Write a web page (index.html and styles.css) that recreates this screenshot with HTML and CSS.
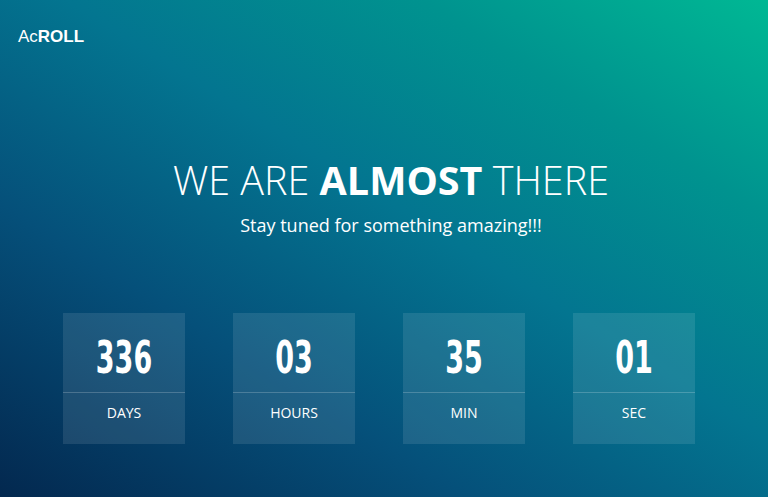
FILE: index.html
```html
<!DOCTYPE html>
<html>
<head>
<meta charset="utf-8">
<link rel="stylesheet" href="styles.css">
</head>
<body>
<div class="page">
  <header class="logo"><span class="ac">Ac</span><span class="roll">ROLL</span></header>
  <section class="hero">
    <h1 class="title">WE ARE <strong>ALMOST</strong> THERE</h1>
    <p class="subtitle">Stay tuned for something amazing!!!</p>
  </section>
  <section class="countdown">
    <div class="box"><div class="num"><span>336</span></div><div class="label">DAYS</div></div>
    <div class="box"><div class="num"><span>03</span></div><div class="label">HOURS</div></div>
    <div class="box"><div class="num"><span>35</span></div><div class="label">MIN</div></div>
    <div class="box"><div class="num"><span>01</span></div><div class="label">SEC</div></div>
  </section>
</div>
</body>
</html>
```
FILE: styles.css
```css
html, body {
  margin: 0;
  padding: 0;
  height: 100%;
  overflow: hidden;
}
.page {
  width: 768px;
  height: 497px;
  background: linear-gradient(32deg, #03284f 0%, #05507a 30%, #037590 55%, #00938f 78%, #00b894 100%);
  color: #fff;
  font-family: "Open Sans", "Noto Sans", sans-serif;
  display: flex;
  flex-direction: column;
}
.logo {
  padding: 28px 0 0 18px;
  font-family: "Liberation Sans", Arial, sans-serif;
  font-size: 17px;
  line-height: 18px;
  height: 18px;
}
.logo .roll { font-weight: bold; }
.hero {
  margin-top: 110px;
  text-align: center;
  padding-left: 14px;
}
.title {
  margin: 0;
  font-size: 39.5px;
  line-height: 48px;
  font-weight: 300;
}
.title strong { font-weight: 700; }
.subtitle {
  margin: 9px 0 0;
  font-size: 18px;
  line-height: 24px;
}
.countdown {
  margin-top: 76px;
  display: flex;
  gap: 48px;
  padding-left: 63px;
}
.box {
  width: 122px;
  height: 131px;
  background: rgba(255, 255, 255, 0.1);
  display: flex;
  flex-direction: column;
}
.num {
  height: 69px;
  padding-top: 10px;
  border-bottom: 1px solid rgba(255, 255, 255, 0.2);
  display: flex;
  align-items: center;
  justify-content: center;
  font-family: "DejaVu Sans Condensed", "DejaVu Sans", sans-serif;
  font-weight: bold;
  font-size: 30px;
  line-height: 30px;
}
.num span {
  display: inline-block;
  transform: scaleY(1.5);
}
.label {
  padding-top: 10px;
  text-align: center;
  font-size: 14px;
  line-height: 20px;
}
```
